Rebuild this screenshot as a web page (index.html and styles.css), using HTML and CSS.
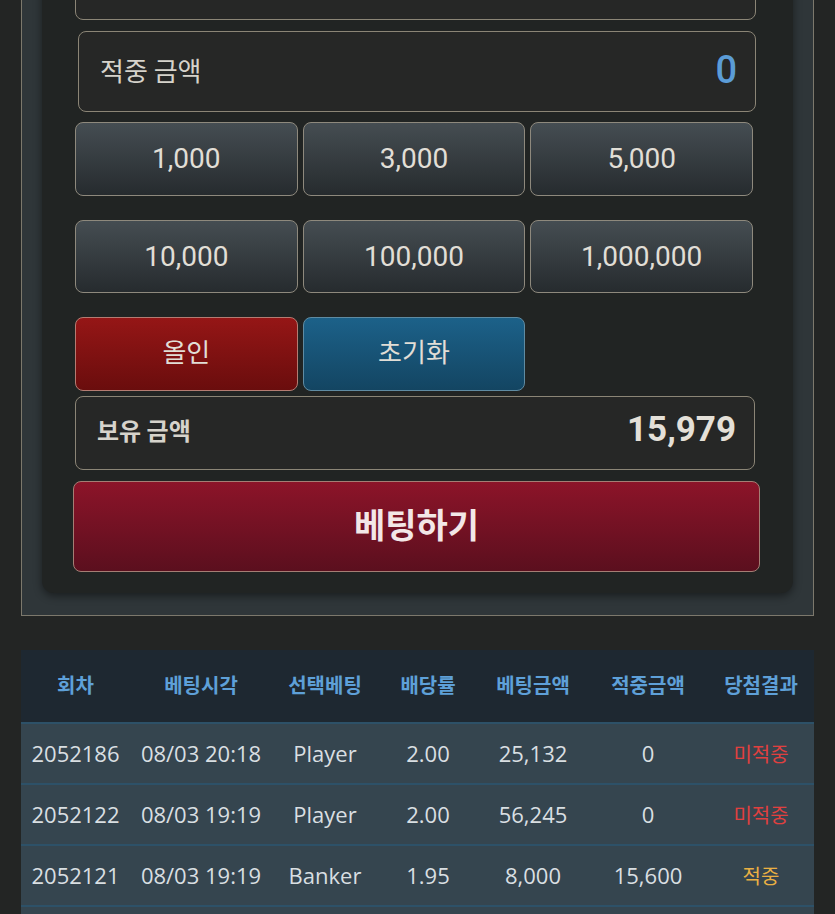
FILE: index.html
```html
<!DOCTYPE html>
<html>
<head>
  <meta charset="utf-8">
  <title>베팅</title>
  <link rel="stylesheet" href="styles.css">
</head>
<body>

  <section class="bet-box">
    <div class="bet-panel">
      <div class="field field-top"></div>

      <div class="field field-win">
        <span class="field-label">적중 금액</span>
        <span class="win-value">0</span>
      </div>

      <div class="chip-grid">
        <button class="chip">1,000</button>
        <button class="chip">3,000</button>
        <button class="chip">5,000</button>
      </div>
      <div class="chip-grid">
        <button class="chip">10,000</button>
        <button class="chip">100,000</button>
        <button class="chip">1,000,000</button>
      </div>
      <div class="chip-grid">
        <button class="chip chip-red">올인</button>
        <button class="chip chip-blue">초기화</button>
      </div>

      <div class="field field-money">
        <span class="field-label bold">보유 금액</span>
        <span class="money-value">15,979</span>
      </div>

      <button class="bet-btn">베팅하기</button>
    </div>
  </section>

  <table class="history">
    <thead>
      <tr>
        <th class="c1">회차</th>
        <th class="c2">베팅시각</th>
        <th class="c3">선택베팅</th>
        <th class="c4">배당률</th>
        <th class="c5">베팅금액</th>
        <th class="c6">적중금액</th>
        <th class="c7">당첨결과</th>
      </tr>
    </thead>
    <tbody>
      <tr>
        <td>2052186</td>
        <td>08/03 20:18</td>
        <td>Player</td>
        <td>2.00</td>
        <td>25,132</td>
        <td>0</td>
        <td class="lose">미적중</td>
      </tr>
      <tr>
        <td>2052122</td>
        <td>08/03 19:19</td>
        <td>Player</td>
        <td>2.00</td>
        <td>56,245</td>
        <td>0</td>
        <td class="lose">미적중</td>
      </tr>
      <tr>
        <td>2052121</td>
        <td>08/03 19:19</td>
        <td>Banker</td>
        <td>1.95</td>
        <td>8,000</td>
        <td>15,600</td>
        <td class="win">적중</td>
      </tr>
      <!-- next row starts just below the fold -->
      <tr class="row-more">
        <td></td><td></td><td></td><td></td><td></td><td></td><td></td>
      </tr>
    </tbody>
  </table>

</body>
</html>
```

FILE: styles.css
```css
* {
  box-sizing: border-box;
}

html {
  font-family: "Noto Sans CJK KR", sans-serif;
}

body {
  margin: 0;
  background: #232524;
  color: #dcd9d1;
  overflow: hidden;
}

/* outer frame, its top is scrolled off the screen */
.bet-box {
  margin: -91px 21px 0 21px;
  border: 1px solid #7c786c;
  background: #2f3639;
  padding: 20px 20px 22px 20px;
}

.bet-panel {
  background: #212423;
  border-radius: 0 0 12px 12px;
  padding: 20px 37px 21px 33px;
  box-shadow: 0 3px 8px rgba(0, 0, 0, 0.45);
}

.field {
  border: 1px solid #8b8576;
  border-radius: 8px;
  background: #262726;
  display: flex;
  align-items: center;
  justify-content: space-between;
}

.field-top {
  height: 70px;
}

.field-win {
  height: 81px;
  margin: 11px 0 0 3px;
  padding: 0 18px 4px 21px;
}

.field-label {
  font-size: 26px;
  color: #d6d3cb;
}

.field-label.bold {
  font-size: 24px;
  font-weight: 700;
}

.win-value {
  font-family: Roboto, sans-serif;
  font-size: 38px;
  font-weight: 500;
  color: #5b9cd6;
}

.chip-grid {
  display: grid;
  grid-template-columns: repeat(3, 1fr);
  gap: 5px;
  margin-top: 24px;
  padding-right: 3px;
}

.field-win + .chip-grid {
  margin-top: 10px;
}

.chip {
  height: 73.5px;
  border: 1px solid #8e897d;
  border-radius: 8px;
  background: linear-gradient(#454d52, #262b2e);
  color: #e1ded6;
  font-family: Roboto, "Noto Sans CJK KR", sans-serif;
  font-size: 28px;
  padding: 0;
}

.chip-red {
  background: linear-gradient(#951616, #6a0d0d);
  border-color: #b47c72;
  font-family: "Noto Sans CJK KR", sans-serif;
  font-size: 26px;
  padding-bottom: 6px;
}

.chip-blue {
  background: linear-gradient(#1c6189, #134562);
  border-color: #5f8ba2;
  font-family: "Noto Sans CJK KR", sans-serif;
  font-size: 26px;
  padding-bottom: 6px;
}

.field-money {
  height: 73.5px;
  margin-top: 5.5px;
  margin-right: 1px;
  padding: 0 18px 6px 21px;
}

.money-value {
  font-family: Roboto, sans-serif;
  font-size: 35px;
  font-weight: 700;
  color: #e4e0d8;
}

.bet-btn {
  display: block;
  width: calc(100% + 6px);
  height: 91px;
  margin: 11px 0 0 -2px;
  border: 1px solid #a47e74;
  border-radius: 8px;
  background: linear-gradient(#8c1429, #5b0f1e);
  color: #f3e7e7;
  font-family: "Noto Sans CJK KR", sans-serif;
  font-size: 34px;
  font-weight: 700;
  padding: 0 0 6px 0;
}

/* history table */
.history {
  width: 793px;
  margin: 34px 0 0 21px;
  border-collapse: collapse;
  table-layout: fixed;
  font-family: "Open Sans", "Noto Sans CJK KR", sans-serif;
}

.history th {
  height: 73px;
  background: #1e2831;
  color: #5ea0d8;
  font-family: "Noto Sans CJK KR", sans-serif;
  font-size: 20px;
  font-weight: 700;
  padding: 0 0 3px 0;
}

.history td {
  height: 61px;
  background: #35454f;
  border-top: 2px solid #2d5168;
  color: #d9dfe2;
  font-size: 22px;
  text-align: center;
  padding: 0;
}

.c1 { width: 109px; }
.c2 { width: 142px; }
.c3 { width: 106px; }
.c4 { width: 100px; }
.c5 { width: 110px; }
.c6 { width: 120px; }
.c7 { width: 106px; }

.history td.lose {
  color: #e0403f;
  font-family: "Noto Sans CJK KR", sans-serif;
  font-size: 20px;
}

.history td.win {
  color: #eab043;
  font-family: "Noto Sans CJK KR", sans-serif;
  font-size: 20px;
}
```
